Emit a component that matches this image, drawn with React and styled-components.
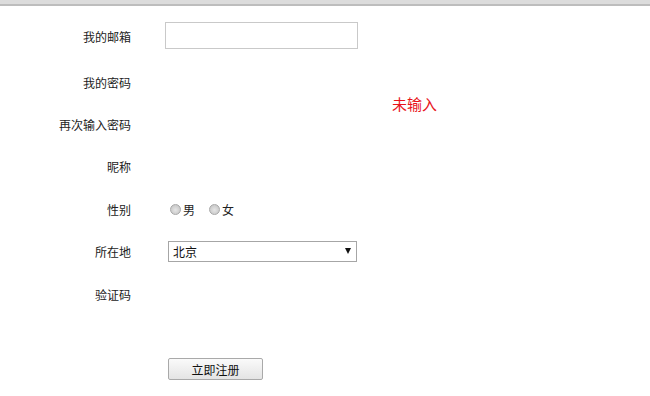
import React from "react";
import styled, { createGlobalStyle } from "styled-components";

const GlobalStyle = createGlobalStyle`
  html, body {
    margin: 0;
    padding: 0;
    background: #fff;
  }
  body {
    font-family: "Noto Sans CJK SC", "Liberation Sans", sans-serif;
    font-size: 12px;
    color: #222;
  }
`;

const TopBar = styled.div`
  height: 4px;
  background: #dcdcdc;
  border-bottom: 2px solid #bdbdbd;
`;

const Form = styled.form`
  display: grid;
  grid-template-columns: 131px 227px auto;
  grid-template-rows: 50px 42px 42px 42px 43px 42px 43px;
  column-gap: 34px;
  align-items: center;
  padding-top: 6px;
`;

const Label = styled.div`
  grid-column: 1;
  grid-row: ${(p) => p.$row};
  text-align: right;
  font-size: 12px;
  line-height: 16px;
`;

const Field = styled.div`
  grid-column: 2;
  grid-row: ${(p) => p.$row};
  display: flex;
  align-items: center;
  padding-left: ${(p) => p.$inset || 0}px;
`;

const Message = styled.div`
  grid-column: 3;
  grid-row: 2 / span 2;
  margin-left: -34px;
  color: #e8141a;
  font-size: 15px;
  line-height: 18px;
`;

const TextInput = styled.input`
  box-sizing: border-box;
  width: 193px;
  height: 27px;
  margin-bottom: 4px;
  border: 1px solid #c9c9c9;
  outline: none;
  padding: 0 4px;
  font: inherit;
`;

const RadioGroup = styled.label`
  display: flex;
  align-items: center;
  margin-right: 14px;
  font-size: 12px;
`;

const Radio = styled.input`
  appearance: none;
  width: 11px;
  height: 11px;
  margin: 0 2px 0 0;
  border-radius: 50%;
  border: 1px solid #a8a8a8;
  background: radial-gradient(circle at 50% 55%, #e6e6e6 0, #d0d0d0 55%, #c2c2c2 100%);
`;

const SelectWrap = styled.div`
  position: relative;
  width: 189px;
  margin-bottom: 2px;
`;

const Select = styled.select`
  appearance: none;
  box-sizing: border-box;
  width: 100%;
  height: 21px;
  border: 1px solid #a6a6a6;
  border-radius: 0;
  background: #fff;
  padding: 0 0 0 4px;
  font: inherit;
  font-size: 12px;
  color: #111;
  outline: none;
`;

const Arrow = styled.span`
  position: absolute;
  right: 6px;
  top: 7px;
  width: 0;
  height: 0;
  border-left: 3px solid transparent;
  border-right: 3px solid transparent;
  border-top: 6px solid #111;
  pointer-events: none;
`;

const ButtonRow = styled.div`
  padding: 42px 0 0 168px;
`;

const SubmitButton = styled.button`
  box-sizing: border-box;
  width: 95px;
  height: 22px;
  border: 1px solid #a9a9a9;
  border-radius: 2px;
  background: linear-gradient(#fafafa, #e4e4e4);
  font: inherit;
  font-size: 12px;
  color: #111;
  padding: 0;
`;

export default function App() {
  return (
    <>
      <GlobalStyle />
      <TopBar />
      <Form onSubmit={(e) => e.preventDefault()}>
        <Label $row={1}>我的邮箱</Label>
        <Field $row={1}>
          <TextInput type="text" />
        </Field>

        <Label $row={2}>我的密码</Label>
        <Message>未输入</Message>
        <Label $row={3}>再次输入密码</Label>
        <Label $row={4}>昵称</Label>

        <Label $row={5}>性别</Label>
        <Field $row={5} $inset={5}>
          <RadioGroup>
            <Radio type="radio" name="sex" />男
          </RadioGroup>
          <RadioGroup>
            <Radio type="radio" name="sex" />女
          </RadioGroup>
        </Field>

        <Label $row={6}>所在地</Label>
        <Field $row={6} $inset={3}>
          <SelectWrap>
            <Select defaultValue="北京">
              <option>北京</option>
              <option>上海</option>
              <option>广州</option>
            </Select>
            <Arrow />
          </SelectWrap>
        </Field>

        <Label $row={7}>验证码</Label>
      </Form>
      <ButtonRow>
        <SubmitButton type="submit">立即注册</SubmitButton>
      </ButtonRow>
    </>
  );
}
